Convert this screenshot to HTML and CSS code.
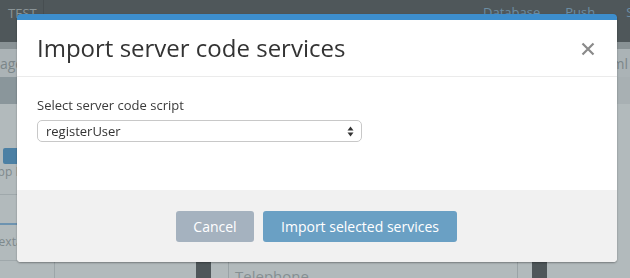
FILE: index.html
```html
<!DOCTYPE html>
<html>
<head>
<meta charset="utf-8">
<link rel="stylesheet" href="styles.css">
</head>
<body>
<div class="app">
  <header class="topbar">
    <div class="left-group">
      <div class="brand">TEST</div>
      <div class="brand-sep"></div>
      <div class="chev">
        <svg width="10" height="6" viewBox="0 0 10 6"><path d="M1 1l4 4 4-4" fill="none" stroke="#8a9497" stroke-width="1.3"/></svg>
      </div>
    </div>
    <nav class="nav"><span class="nav-db">Database</span><span class="nav-push">Push</span><span class="nav-se">Se</span></nav>
  </header>
  <div class="band"></div>
  <div class="tabs"><span class="tab-left">Manage</span><span class="tab-right">Html</span></div>
  <div class="toolbar"><div class="toolbar-left"></div><div class="toolbar-right"></div></div>
  <div class="main">
    <aside class="side">
      <div class="side-btn"></div>
      <div class="side-text">App B</div>
      <div class="side-row"><span class="side-t">T</span></div>
      <div class="side-text2">Textarea</div>
    </aside>
    <div class="col-gap"></div>
    <div class="dark-block"></div>
    <div class="field-col">
      <div class="field-label">Telephone</div>
    </div>
    <div class="dark-block"></div>
    <div class="rest"></div>
  </div>
</div>

<div class="overlay">
  <div class="modal">
    <div class="modal-header">
      <h1 class="modal-title">Import server code services</h1>
      <button class="close-btn" aria-label="Close">
        <svg width="14" height="14" viewBox="0 0 14 14"><path d="M1.5 1.5l11 11M12.5 1.5l-11 11" stroke="#8a8a8a" stroke-width="2.2" fill="none"/></svg>
      </button>
    </div>
    <div class="modal-body">
      <label class="field-title">Select server code script</label>
      <div class="select">
        <span class="select-value">registerUser</span>
        <svg class="select-arrows" width="7" height="11" viewBox="0 0 7 11"><path d="M3.5 0.5L6.5 4.5H0.5Z" fill="#333"/><path d="M3.5 10.5L6.5 6.5H0.5Z" fill="#333"/></svg>
      </div>
    </div>
    <div class="modal-footer">
      <button class="btn btn-cancel">Cancel</button>
      <button class="btn btn-primary">Import selected services</button>
    </div>
  </div>
</div>
</body>
</html>
```

FILE: styles.css
```css
* { box-sizing: border-box; }
html, body {
  margin: 0;
  padding: 0;
  width: 630px;
  height: 278px;
  overflow: hidden;
  font-family: "Open Sans", "Liberation Sans", sans-serif;
  background: #b2babc;
}

.app {
  display: flex;
  flex-direction: column;
  height: 278px;
}

.topbar {
  height: 42px;
  background: #4f575a;
  display: flex;
  flex: none;
  overflow: hidden;
}
.left-group {
  flex: 0 0 483px;
  display: flex;
}
.brand {
  width: 43px;
  padding: 4px 0 0 8px;
  font-size: 13px;
  color: #8a9497;
  line-height: 18px;
}
.brand-sep {
  width: 1px;
  background: #474e51;
}
.chev {
  padding: 10px 0 0 12px;
}
.nav {
  display: flex;
  padding-top: 3px;
  font-size: 13px;
  line-height: 18px;
  color: #6c8da3;
  white-space: nowrap;
}
.nav-push { margin-left: 25px; }
.nav-se { margin-left: 31px; }

.band {
  height: 7px;
  background: #899295;
  flex: none;
}
.tabs {
  height: 28px;
  background: #abb3b6;
  display: flex;
  justify-content: space-between;
  align-items: center;
  font-size: 14px;
  color: #7b8689;
  flex: none;
  overflow: hidden;
}
.tab-left { margin-left: -29px; }
.tab-right { margin-right: 2px; }

.toolbar {
  height: 27px;
  display: flex;
  flex: none;
}
.toolbar-left { width: 60px; background: #8a969b; }
.toolbar-right { flex: 1; background: #a8b0b3; }

.main {
  flex: 1;
  display: flex;
}
.side {
  width: 55px;
  border-right: 1px solid #9da6a9;
  display: flex;
  flex-direction: column;
  padding-top: 44px;
  background: #b2babc;
}
.side-btn {
  height: 16px;
  width: 40px;
  margin-left: 3px;
  border-radius: 2px;
  background: #4c80a4;
}
.side-text {
  margin-left: -10px;
  font-size: 12px;
  color: #7e898c;
  line-height: 14px;
  margin-top: 1px;
  border-bottom: 1px solid #9fa8ab;
  padding-bottom: 16px;
  height: 30px;
}
.side-row {
  height: 22px;
  border-bottom: 2px solid #6d93b0;
  margin-top: 8px;
  text-align: right;
  padding-right: 22px;
}
.side-t {
  font-family: "Liberation Serif", serif;
  font-weight: bold;
  color: #587f9c;
  font-size: 15px;
}
.side-text2 {
  margin-left: -8px;
  font-size: 12px;
  color: #7e898c;
  padding-top: 8px;
  height: 36px;
  border-bottom: 1px solid #9fa8ab;
}
.col-gap { width: 141px; }
.dark-block {
  width: 15px;
  background: #4f575a;
  align-self: flex-end;
  height: 40px;
  flex: none;
}
.field-col {
  width: 290px;
  flex: none;
  border-left: 1px solid #9aa3a6;
  margin-left: 17px;
  margin-right: 14px;
  border-right: 1px solid #9aa3a6;
  display: flex;
  flex-direction: column;
  justify-content: flex-end;
  padding-left: 6px;
}
.field-label {
  font-size: 15px;
  color: #858f92;
  line-height: 20px;
  margin-bottom: -8px;
}
.rest { flex: 1; }

/* Modal */
.overlay {
  position: fixed;
  inset: 0;
  padding: 14px 13px 0 17px;
}
.modal {
  width: 600px;
  height: 248px;
  background: #fff;
  border-top: 6px solid #3d8ecd;
  border-radius: 4px;
  box-shadow: 0 1px 2px rgba(0,0,0,0.35);
  display: flex;
  flex-direction: column;
  overflow: hidden;
}
.modal-header {
  height: 57px;
  border-bottom: 1px solid #ebebeb;
  display: flex;
  align-items: center;
  justify-content: space-between;
  padding: 0 22px 0 20px;
  flex: none;
}
.modal-title {
  margin: 0;
  font-size: 24px;
  font-weight: 400;
  color: #333;
  line-height: 32px;
  padding-bottom: 1px;
}
.close-btn {
  border: 0;
  background: none;
  padding: 0;
  width: 14px;
  height: 14px;
  display: flex;
  margin-top: 1px;
}
.modal-body {
  flex: 1;
  padding: 19px 20px 0 20px;
  display: flex;
  flex-direction: column;
}
.field-title {
  font-size: 13px;
  color: #3a3a3a;
  line-height: 18px;
  margin-bottom: 6px;
}
.select {
  width: 325px;
  height: 22px;
  border: 1px solid #c8c8c8;
  border-radius: 5px;
  display: flex;
  align-items: center;
  justify-content: space-between;
  padding: 0 7px 0 8px;
  font-size: 13px;
  color: #333;
}
.select-value { line-height: 18px; }

.modal-footer {
  height: 72px;
  flex: none;
  background: #f1f1f1;
  display: flex;
  justify-content: center;
  align-items: flex-start;
  gap: 9px;
  padding-top: 21px;
  padding-right: 1px;
}
.btn {
  height: 31px;
  border: 0;
  border-radius: 3px;
  color: #fff;
  font-family: "Open Sans", "Liberation Sans", sans-serif;
  font-size: 14px;
  padding: 0;
}
.btn-cancel {
  width: 78px;
  background: #a5b2bf;
}
.btn-primary {
  width: 194px;
  background: #6aa0c4;
}
```
